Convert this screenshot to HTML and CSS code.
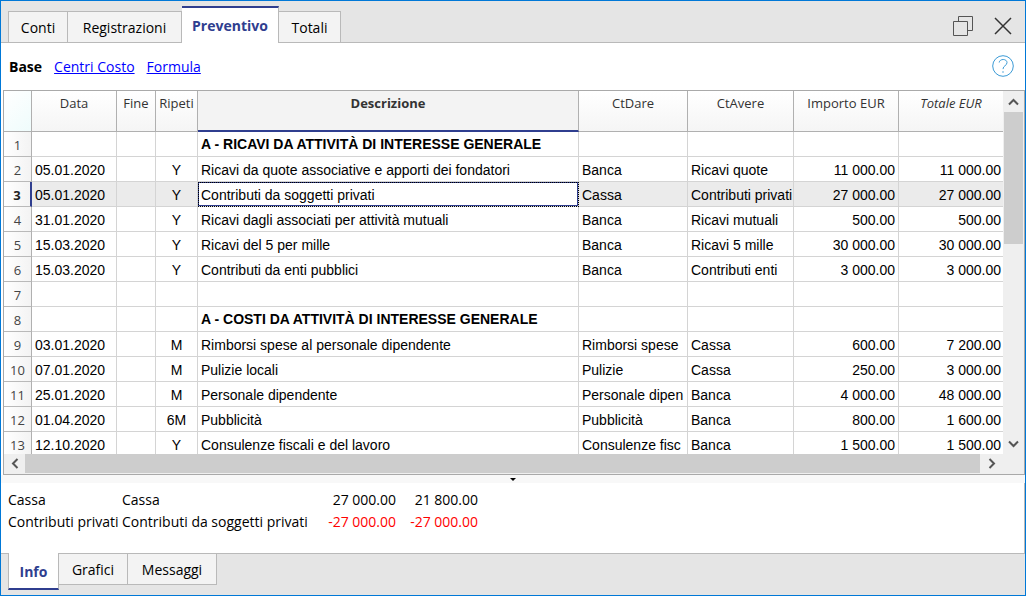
FILE: index.html
```html
<!DOCTYPE html>
<html lang="it">
<head>
<meta charset="utf-8">
<title>Preventivo</title>
<link rel="stylesheet" href="styles.css">
</head>
<body>
<div class="window">
  <header class="titlebar">
    <nav class="tabs">
      <button class="tab tab-conti">Conti</button>
      <button class="tab tab-registrazioni">Registrazioni</button>
      <button class="tab tab-preventivo active">Preventivo</button>
      <button class="tab tab-totali">Totali</button>
    </nav>
    <div class="window-actions">
      <button class="icon-button" aria-label="Ripristina">
        <svg width="22" height="22" viewBox="0 0 22 22" fill="none" stroke="#555"><path d="M1.500 6.500h14v14h-14z"/><path d="M6.500 6.500v-5h14v14h-5"/></svg>
      </button>
      <button class="icon-button" aria-label="Chiudi">
        <svg width="18" height="18" viewBox="0 0 18 18" fill="none" stroke="#333" stroke-width="1.500"><path d="M1 1l16 16M17 1L1 17"/></svg>
      </button>
    </div>
  </header>

  <div class="views">
    <strong class="view-current">Base</strong>
    <a href="#">Centri Costo</a>
    <a href="#">Formula</a>
    <button class="help" aria-label="Aiuto">
      <svg width="22" height="22" viewBox="0 0 22 22" fill="none" stroke="#3c9bd6"><circle cx="11" cy="11" r="10.300"/><path d="M7.200 7.500C7.500 3.500 15 3.500 15 7.600c0 3.200-4 2.900-4 6.500M11 16.200v1.600"/></svg>
    </button>
  </div>

  <main class="pane">
    <div class="sheet">
      <table class="grid">
        <colgroup><col class="c-num"><col class="c-data"><col class="c-fine"><col class="c-ripeti"><col class="c-descr"><col class="c-dare"><col class="c-avere"><col class="c-imp"><col class="c-tot"></colgroup>
        <thead>
          <tr><th class="corner"></th><th>Data</th><th>Fine</th><th>Ripeti</th><th class="current">Descrizione</th><th>CtDare</th><th>CtAvere</th><th>Importo EUR</th><th class="computed">Totale EUR</th></tr>
        </thead>
        <tbody>
          <tr><th>1</th><td></td><td></td><td></td><td class="section">A - RICAVI DA ATTIVITÀ DI INTERESSE GENERALE</td><td></td><td></td><td></td><td></td></tr>
          <tr><th>2</th><td>05.01.2020</td><td></td><td class="mid">Y</td><td>Ricavi da quote associative e apporti dei fondatori</td><td>Banca</td><td>Ricavi quote</td><td class="num">11 000.00</td><td class="num">11 000.00</td></tr>
          <tr class="selected"><th>3</th><td>05.01.2020</td><td></td><td class="mid">Y</td><td class="cursor">Contributi da soggetti privati</td><td>Cassa</td><td>Contributi privati</td><td class="num">27 000.00</td><td class="num">27 000.00</td></tr>
          <tr><th>4</th><td>31.01.2020</td><td></td><td class="mid">Y</td><td>Ricavi dagli associati per attività mutuali</td><td>Banca</td><td>Ricavi mutuali</td><td class="num">500.00</td><td class="num">500.00</td></tr>
          <tr><th>5</th><td>15.03.2020</td><td></td><td class="mid">Y</td><td>Ricavi del 5 per mille</td><td>Banca</td><td>Ricavi 5 mille</td><td class="num">30 000.00</td><td class="num">30 000.00</td></tr>
          <tr><th>6</th><td>15.03.2020</td><td></td><td class="mid">Y</td><td>Contributi da enti pubblici</td><td>Banca</td><td>Contributi enti</td><td class="num">3 000.00</td><td class="num">3 000.00</td></tr>
          <tr><th>7</th><td></td><td></td><td></td><td></td><td></td><td></td><td></td><td></td></tr>
          <tr><th>8</th><td></td><td></td><td></td><td class="section">A - COSTI DA ATTIVITÀ DI INTERESSE GENERALE</td><td></td><td></td><td></td><td></td></tr>
          <tr><th>9</th><td>03.01.2020</td><td></td><td class="mid">M</td><td>Rimborsi spese al personale dipendente</td><td>Rimborsi spese</td><td>Cassa</td><td class="num">600.00</td><td class="num">7 200.00</td></tr>
          <tr><th>10</th><td>07.01.2020</td><td></td><td class="mid">M</td><td>Pulizie locali</td><td>Pulizie</td><td>Cassa</td><td class="num">250.00</td><td class="num">3 000.00</td></tr>
          <tr><th>11</th><td>25.01.2020</td><td></td><td class="mid">M</td><td>Personale dipendente</td><td>Personale dipen</td><td>Banca</td><td class="num">4 000.00</td><td class="num">48 000.00</td></tr>
          <tr><th>12</th><td>01.04.2020</td><td></td><td class="mid">6M</td><td>Pubblicità</td><td>Pubblicità</td><td>Banca</td><td class="num">800.00</td><td class="num">1 600.00</td></tr>
          <tr><th>13</th><td>12.10.2020</td><td></td><td class="mid">Y</td><td>Consulenze fiscali e del lavoro</td><td>Consulenze fisc</td><td>Banca</td><td class="num">1 500.00</td><td class="num">1 500.00</td></tr>
        </tbody>
      </table>
    </div>
    <div class="scroll-v">
      <button class="arrow" aria-label="Su"><svg width="11" height="8" viewBox="0 0 11 8" fill="none" stroke="#555" stroke-width="2"><path d="M1 6.500l4.500-4.500L10 6.500"/></svg></button>
      <div class="thumb-v"></div>
      <div class="track"></div>
      <button class="arrow" aria-label="Giù"><svg width="11" height="8" viewBox="0 0 11 8" fill="none" stroke="#555" stroke-width="2"><path d="M1 1.500l4.500 4.500L10 1.500"/></svg></button>
    </div>
    <div class="scroll-h">
      <button class="arrow" aria-label="Sinistra"><svg width="8" height="11" viewBox="0 0 8 11" fill="none" stroke="#555" stroke-width="2"><path d="M6.500 1L2 5.500 6.500 10"/></svg></button>
      <div class="thumb-h"></div>
      <button class="arrow" aria-label="Destra"><svg width="8" height="11" viewBox="0 0 8 11" fill="none" stroke="#555" stroke-width="2"><path d="M1.500 1L6 5.500 1.500 10"/></svg></button>
    </div>
  </main>

  <div class="splitter"><svg width="6" height="3" viewBox="0 0 6 3"><path d="M0 0h6L3 3z"/></svg></div>

  <section class="info">
    <table class="balances">
      <tr><td class="b-account">Cassa</td><td class="b-descr">Cassa</td><td class="b-amount">27 000.00</td><td class="b-amount">21 800.00</td></tr>
      <tr><td class="b-account">Contributi privati</td><td class="b-descr">Contributi da soggetti privati</td><td class="b-amount negative">-27 000.00</td><td class="b-amount negative">-27 000.00</td></tr>
    </table>
  </section>

  <footer class="bottombar">
    <button class="btab btab-info active">Info</button>
    <button class="btab btab-grafici">Grafici</button>
    <button class="btab btab-messaggi">Messaggi</button>
  </footer>
</div>
</body>
</html>
```
FILE: styles.css
```css
* { box-sizing: border-box; }

body {
  margin: 0;
  font-family: "Open Sans", "Noto Sans", sans-serif;
  font-size: 14px;
  color: #000;
}

button {
  margin: 0;
  padding: 0;
  border: 0;
  background: none;
  font: inherit;
  color: inherit;
}

svg { display: block; }

.window {
  display: flex;
  flex-direction: column;
  height: 100vh;
  border: 1px solid #0078d7;
  background: #fff;
}

/* Title bar and main tabs */
.titlebar {
  display: flex;
  justify-content: space-between;
  height: 42px;
  background: #e5e5e5;
  box-shadow: inset 0 -1px #b9b9b9;
}

.tabs {
  display: flex;
  align-items: flex-end;
  padding-left: 7px;
}

.tab {
  height: 32px;
  border: 1px solid #b9b9b9;
  border-left-width: 0;
  background: #f3f3f3;
}

.tab-conti { width: 60px; border-left-width: 1px; }
.tab-registrazioni { width: 114px; }
.tab-preventivo { width: 97px; }
.tab-totali { width: 62px; }

.tab.active {
  height: 37px;
  border-top: 2px solid #2f3e8f;
  border-bottom: 0;
  background: #fff;
  color: #2f3e8f;
  font-weight: 700;
}

.window-actions {
  display: flex;
  align-items: center;
  gap: 20px;
  padding: 8px 13px 0 0;
}

/* View links */
.views {
  display: flex;
  align-items: center;
  gap: 12px;
  height: 47px;
  padding: 0 11px 1px 8px;
}

.views a { color: #00f; }
.help { margin-left: auto; }

/* Spreadsheet pane */
.pane {
  display: grid;
  flex: 1;
  grid-template-columns: minmax(0, 1fr) 21px;
  grid-template-rows: minmax(0, 1fr) 20px;
  min-height: 0;
  margin-left: 2px;
  border: 1px solid #a9a9a9;
  background: #efefef;
}

.sheet {
  overflow: hidden;
  background: #fff;
}

.grid {
  width: 100%;
  border-collapse: separate;
  border-spacing: 0;
  table-layout: fixed;
}

.c-num { width: 28px; }
.c-data { width: 85px; }
.c-fine { width: 39px; }
.c-ripeti { width: 42px; }
.c-dare { width: 109px; }
.c-avere { width: 106px; }
.c-imp { width: 105px; }
.c-tot { width: 104px; }

.grid th,
.grid td {
  overflow: hidden;
  height: 25px;
  padding: 0;
  border-right: 1px solid #d4d4d4;
  border-bottom: 1px solid #d4d4d4;
  white-space: nowrap;
}

.grid td {
  padding: 2px 0 0 3px;
  font-family: "Liberation Sans", Arial, sans-serif;
  font-size: 14px;
}

.grid thead th {
  height: 41px;
  padding: 3px 0 0;
  border-right-color: #b0b0b0;
  border-bottom-color: #b0b0b0;
  background: linear-gradient(#fff, #f5f5f5);
  color: #333;
  font-size: 13px;
  font-weight: 400;
  vertical-align: top;
}

.grid thead th.corner { background: linear-gradient(135deg, #fff, #effcfc); }

.grid thead th.current {
  border-bottom: 2px solid #2f3e8f;
  background: #f3f3f3;
  font-weight: 700;
}

.grid thead th.computed { font-style: italic; }

.grid tbody th {
  padding-top: 1px;
  border-right-color: #b0b0b0;
  border-bottom-color: #b9b9b9;
  background: linear-gradient(90deg, #fff, #f3f3f3);
  color: #444;
  font-size: 13px;
  font-weight: 400;
}

.grid tr > :last-child { border-right: 0; }

.grid td.mid { padding-left: 0; text-align: center; }
.grid td.num { padding-right: 3px; text-align: right; }
.grid tr > td.num:last-child { padding-right: 2px; }
.grid td.section { padding-top: 0; font-weight: 700; }

.grid .selected td { background: #ebebeb; }

.grid .selected th {
  border-right: 2px solid #2f3e8f;
  color: #222;
  font-weight: 700;
}

.grid .selected td.cursor {
  background: #fff;
  box-shadow: inset 0 0 0 1px #2f3e8f;
  outline: 1px dotted #000;
  outline-offset: -1px;
}

/* Scroll bars */
.scroll-v {
  display: flex;
  flex-direction: column;
}

.scroll-h {
  display: flex;
  padding-bottom: 1px;
}

.arrow {
  display: flex;
  align-items: center;
  justify-content: center;
  width: 20px;
  height: 21px;
}

.scroll-h .arrow { width: 21px; height: 19px; }
.thumb-v { width: 19px; height: 132px; margin-left: 1px; background: #cdcdcd; }
.track { flex: 1; }
.thumb-h { flex: 1; background: #cdcdcd; }
.scroll-h .arrow:last-child { width: 23px; }

/* Splitter */
.splitter {
  display: flex;
  justify-content: center;
  height: 8px;
  padding-top: 3px;
  background: #f8f8f8;
}

/* Account information */
.info {
  height: 71px;
  padding: 5px 7px;
  border-right: 1px solid #b9b9b9;
  border-bottom: 1px solid #b9b9b9;
}

.balances {
  border-collapse: collapse;
  table-layout: fixed;
  width: 470px;
}

.balances td {
  height: 22px;
  padding: 0;
  white-space: nowrap;
}

.b-account { width: 114px; }
.b-descr { width: 192px; }
.b-amount { width: 82px; }
.balances .b-amount { text-align: right; }
.negative { color: #f00; }

/* Bottom tabs */
.bottombar {
  display: flex;
  align-items: flex-start;
  height: 41px;
  padding-left: 7px;
  background: #e5e5e5;
}

.btab {
  height: 31px;
  border: 1px solid #b9b9b9;
  border-top: 0;
  border-left: 0;
  background: #f3f3f3;
}

.btab-info { width: 51px; }
.btab-grafici { width: 69px; }
.btab-messaggi { width: 89px; }

.btab.active {
  height: 37px;
  margin-top: -1px;
  padding-top: 1px;
  border-bottom: 2px solid #2f3e8f;
  border-left: 1px solid #b9b9b9;
  background: #fff;
  color: #2f3e8f;
  font-weight: 700;
}
```
